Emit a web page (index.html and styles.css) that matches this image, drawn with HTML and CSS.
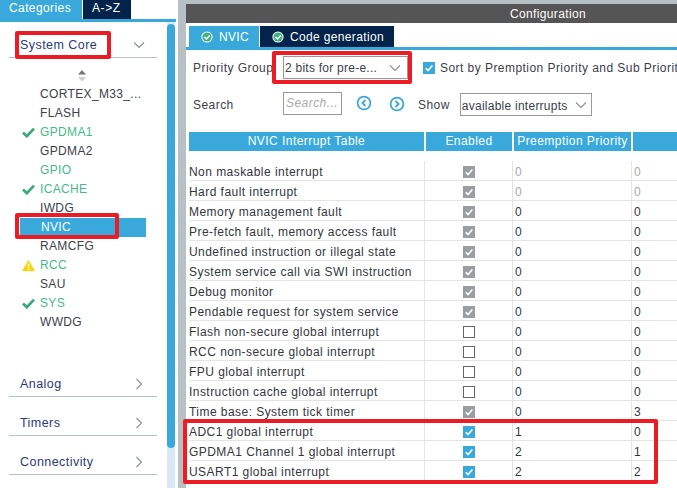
FILE: index.html
```html
<!DOCTYPE html>
<html lang="en">

<head>
    <meta charset="UTF-8">
    <title>Configuration</title>
    <link rel="stylesheet" href="styles.css">
</head>

<body>
    <svg class="defs" width="0" height="0">
        <symbol id="tick" viewBox="0 0 12 12">
            <path d="M2.8 6.2 5 8.6 9.4 3.4" fill="none" stroke="#fff" stroke-width="1.6" />
        </symbol>
        <symbol id="bigtick" viewBox="0 0 13 11">
            <path d="M1 5.5 4.8 9.2 12 1.6" fill="none" stroke="#3fa878" stroke-width="2.8" />
        </symbol>
        <symbol id="tabok" viewBox="0 0 12 12">
            <circle cx="6" cy="6" r="5.6" fill="#fff" />
            <circle cx="6" cy="6" r="4.6" fill="#3fb37f" />
            <path d="M3.4 6 5.4 8 8.8 4.4" fill="none" stroke="#fff" stroke-width="1.5" />
        </symbol>
    </svg>

    <div class="app">
        <div class="sidebar">
            <div class="sideTabs">
                <div class="sideTab sideTabOn">Categories</div>
                <div class="sideTab">A-&gt;Z</div>
            </div>
            <div class="sideBody">
                <div class="sideContent">
                    <div class="catHead">
                        <span>System Core</span>
                        <svg class="chev" width="12" height="12" viewBox="0 0 12 12"><path d="M1 3.5 6 8.5 11 3.5" /></svg>
                    </div>
                    <svg class="sortIcon" width="10" height="12" viewBox="0 0 10 12">
                        <path d="M5 0 9 4.5H1Z" fill="#777" />
                        <path d="M1 7H9L5 11.5Z" fill="#cfcfcf" />
                    </svg>
                    <ul class="periphList">
                        <li>CORTEX_M33_...</li>
                        <li>FLASH</li>
                        <li class="ok"><svg class="mark"><use href="#bigtick" /></svg>GPDMA1</li>
                        <li>GPDMA2</li>
                        <li class="ok">GPIO</li>
                        <li class="ok"><svg class="mark"><use href="#bigtick" /></svg>ICACHE</li>
                        <li>IWDG</li>
                        <li class="selected">NVIC</li>
                        <li>RAMCFG</li>
                        <li class="ok">
                            <svg class="mark" viewBox="0 0 13 11"><path d="M6.5 0 13 11H0Z" fill="#ffd200" /><path d="M6.5 3.5V7.5M6.5 8.5V10" stroke="#fff" stroke-width="1.4" /></svg>RCC
                        </li>
                        <li>SAU</li>
                        <li class="ok"><svg class="mark"><use href="#bigtick" /></svg>SYS</li>
                        <li>WWDG</li>
                    </ul>
                    <div class="catHead catFirst">
                        <span>Analog</span>
                        <svg class="chev" width="12" height="12" viewBox="0 0 12 12"><path d="M3.5 1 8.5 6 3.5 11" /></svg>
                    </div>
                    <div class="catHead">
                        <span>Timers</span>
                        <svg class="chev" width="12" height="12" viewBox="0 0 12 12"><path d="M3.5 1 8.5 6 3.5 11" /></svg>
                    </div>
                    <div class="catHead">
                        <span>Connectivity</span>
                        <svg class="chev" width="12" height="12" viewBox="0 0 12 12"><path d="M3.5 1 8.5 6 3.5 11" /></svg>
                    </div>
                </div>
                <div class="scrollTrack">
                    <div class="scrollThumb"></div>
                </div>
            </div>
        </div>

        <div class="main">
            <div class="mainTitle">Configuration</div>
            <div class="tabs">
                <div class="tab tabOn"><svg class="tabIcon"><use href="#tabok" /></svg>NVIC</div>
                <div class="tab"><svg class="tabIcon"><use href="#tabok" /></svg>Code generation</div>
            </div>

            <div class="toolRow toolFirst">
                <span class="toolLabel">Priority Group</span>
                <div class="select selectGroup">
                    <span>2 bits for pre-e...</span>
                    <svg class="chev" width="12" height="8" viewBox="0 0 12 8"><path d="M1 1.5 6 6.5 11 1.5" /></svg>
                </div>
                <span class="cb cbBlue sortCheck"><svg><use href="#tick" /></svg></span>
                <span>Sort by Premption Priority and Sub Priority</span>
            </div>
            <div class="toolRow toolSearch">
                <span class="toolLabel">Search</span>
                <div class="searchBox">Search...</div>
                <svg class="navIcon navFirst" width="16" height="16" viewBox="0 0 16 16"><circle cx="8" cy="8" r="6.4" /><path d="M9.4 5 6.4 8 9.4 11" /></svg>
                <svg class="navIcon" width="16" height="16" viewBox="0 0 16 16"><circle cx="8" cy="8" r="6.4" /><path d="M6.6 5 9.6 8 6.6 11" /></svg>
                <span class="showLabel">Show</span>
                <div class="select selectShow">
                    <span>available interrupts</span>
                    <svg class="chev" width="12" height="8" viewBox="0 0 12 8"><path d="M1 1.5 6 6.5 11 1.5" /></svg>
                </div>
            </div>

            <div class="nvicTable">
                <div class="headRow">
                    <div>NVIC Interrupt Table</div>
                    <div>Enabled</div>
                    <div>Preemption Priority</div>
                    <div></div>
                </div>
                <div class="rows">
                    <div class="row"><div>Non maskable interrupt</div><div class="c"><span class="cb cbGray"><svg><use href="#tick" /></svg></span></div><div class="off">0</div><div class="off">0</div></div>
                    <div class="row"><div>Hard fault interrupt</div><div class="c"><span class="cb cbGray"><svg><use href="#tick" /></svg></span></div><div class="off">0</div><div class="off">0</div></div>
                    <div class="row"><div>Memory management fault</div><div class="c"><span class="cb cbGray"><svg><use href="#tick" /></svg></span></div><div>0</div><div>0</div></div>
                    <div class="row"><div>Pre-fetch fault, memory access fault</div><div class="c"><span class="cb cbGray"><svg><use href="#tick" /></svg></span></div><div>0</div><div>0</div></div>
                    <div class="row"><div>Undefined instruction or illegal state</div><div class="c"><span class="cb cbGray"><svg><use href="#tick" /></svg></span></div><div>0</div><div>0</div></div>
                    <div class="row"><div>System service call via SWI instruction</div><div class="c"><span class="cb cbGray"><svg><use href="#tick" /></svg></span></div><div>0</div><div>0</div></div>
                    <div class="row"><div>Debug monitor</div><div class="c"><span class="cb cbGray"><svg><use href="#tick" /></svg></span></div><div>0</div><div>0</div></div>
                    <div class="row"><div>Pendable request for system service</div><div class="c"><span class="cb cbGray"><svg><use href="#tick" /></svg></span></div><div>0</div><div>0</div></div>
                    <div class="row"><div>Flash non-secure global interrupt</div><div class="c"><span class="cb"></span></div><div>0</div><div>0</div></div>
                    <div class="row"><div>RCC non-secure global interrupt</div><div class="c"><span class="cb"></span></div><div>0</div><div>0</div></div>
                    <div class="row"><div>FPU global interrupt</div><div class="c"><span class="cb"></span></div><div>0</div><div>0</div></div>
                    <div class="row"><div>Instruction cache global interrupt</div><div class="c"><span class="cb"></span></div><div>0</div><div>0</div></div>
                    <div class="row"><div>Time base: System tick timer</div><div class="c"><span class="cb cbGray"><svg><use href="#tick" /></svg></span></div><div>0</div><div>3</div></div>
                    <div class="row"><div>ADC1 global interrupt</div><div class="c"><span class="cb cbBlue"><svg><use href="#tick" /></svg></span></div><div>1</div><div>0</div></div>
                    <div class="row"><div>GPDMA1 Channel 1 global interrupt</div><div class="c"><span class="cb cbBlue"><svg><use href="#tick" /></svg></span></div><div>2</div><div>1</div></div>
                    <div class="row"><div>USART1 global interrupt</div><div class="c"><span class="cb cbBlue"><svg><use href="#tick" /></svg></span></div><div>2</div><div>2</div></div>
                </div>
            </div>
        </div>
    </div>

    <!-- red marks drawn over the screenshot -->
    <div class="mark1 redBox"></div>
    <div class="mark2 redBox"></div>
    <div class="mark3 redBox"></div>
    <div class="mark4 redBox"></div>
</body>

</html>
```

FILE: styles.css
```css
* {
    margin: 0;
    padding: 0;
    box-sizing: border-box;
}

html,
body {
    width: 100%;
    height: 100%;
    overflow: hidden;
}

body {
    position: relative;
    background-color: #fff;
    font-family: "Liberation Sans", Arial, sans-serif;
    font-size: 12px;
    letter-spacing: 0.45px;
    color: #3c4048;
}

.defs {
    position: absolute;
}

.app {
    display: flex;
    height: 488px;
    width: 910px;
    background-color: #b7c1c5;
}

/* left panel */
.sidebar {
    flex: 0 0 178px;
    display: flex;
    flex-direction: column;
    background-color: #fff;
}

.sideTabs {
    display: flex;
    gap: 1px;
    height: 22px;
    width: 176px;
    border-bottom: 3px solid #39a9dc;
}

.sideTab {
    width: 48px;
    height: 19px;
    line-height: 17px;
    padding-left: 9px;
    background-color: #03234b;
    color: #fff;
    letter-spacing: 0.6px;
}

.sideTabOn {
    width: 82px;
    background-color: #39a9dc;
    letter-spacing: 0.4px;
}

.sideBody {
    flex: 1;
    display: flex;
    min-height: 0;
}

.sideContent {
    width: 167px;
    padding: 0 10px 0 9px;
}

.catHead {
    display: flex;
    justify-content: space-between;
    align-items: center;
    height: 39px;
    padding: 14px 12px 0 11px;
    border-bottom: 1px solid #b7c1c5;
    color: #2a3a78;
    font-size: 12.5px;
}

.catHead:first-child {
    height: 36px;
    padding-top: 10px;
}

.catFirst {
    margin-top: 26px;
}

.chev {
    flex: none;
}

.chev path {
    fill: none;
    stroke: #8a8f93;
    stroke-width: 1.1;
}

.sortIcon {
    display: block;
    margin: 12px 0 3px 68px;
}

.periphList {
    list-style: none;
    letter-spacing: 0.35px;
}

.periphList li {
    position: relative;
    height: 19px;
    line-height: 19px;
    padding-left: 31px;
    margin-right: 2px;
}

.periphList .ok {
    color: #45b98a;
}

.periphList .selected {
    margin-left: 11px;
    margin-right: 11px;
    padding-left: 21px;
    background-color: #39a9dc;
    color: #fff;
}

.mark {
    position: absolute;
    left: 13px;
    top: 4px;
    width: 13px;
    height: 11px;
}

.scrollTrack {
    width: 8px;
    background-color: #d9e8f4;
}

.scrollThumb {
    height: 424px;
    margin-top: 2px;
    border-radius: 4px;
    background-color: #39a9dc;
}

/* right panel */
.main {
    margin-left: 8px;
    flex: 1;
    margin-top: 4px;
    background-color: #fff;
}

.mainTitle {
    height: 19px;
    line-height: 20px;
    background-color: #555;
    color: #fff;
    text-align: center;
    letter-spacing: 0.35px;
}

.tabs {
    display: flex;
    gap: 1px;
    height: 24px;
    margin-top: 3px;
    padding-left: 3px;
    border-bottom: 3px solid #39a9dc;
}

.tab {
    display: flex;
    align-items: center;
    width: 134px;
    padding-left: 12px;
    background-color: #03234b;
    color: #fff;
    letter-spacing: 0.35px;
}

.tabOn {
    width: 70px;
    background-color: #39a9dc;
}

.tabIcon {
    width: 12px;
    height: 12px;
    margin-right: 6px;
}

.toolRow {
    display: flex;
    align-items: center;
    height: 23px;
    margin-top: 13px;
    padding-left: 7px;
}

.toolFirst {
    margin-top: 6px;
}

.toolLabel {
    width: 90px;
}

.toolSearch .toolLabel,
.showLabel,
.selectShow span {
    padding-top: 2px;
}

.select {
    display: flex;
    justify-content: space-between;
    align-items: center;
    height: 23px;
    padding: 0 4px 0 1px;
    border: 1px solid #999;
    letter-spacing: 0.25px;
}

.selectGroup {
    width: 125px;
    padding-right: 6px;
}

.selectShow {
    width: 132px;
    margin-top: 2px;
}

.searchBox {
    width: 59px;
    height: 23px;
    line-height: 21px;
    padding-left: 2px;
    border: 1px solid #999;
    color: #a9a9a9;
    font-style: italic;
}

.navIcon circle,
.navIcon path {
    fill: none;
    stroke: #39a9dc;
    stroke-width: 1.8;
}

.navFirst {
    margin: -1px 17px 0 14px;
}

.showLabel {
    margin: 0 10px 0 13px;
}

.cb {
    display: block;
    flex: none;
    width: 12px;
    height: 12px;
    border: 1px solid #666;
    background-color: #fff;
}

.cb svg {
    display: block;
    width: 12px;
    height: 12px;
}

.cbBlue,
.cbGray {
    border: none;
}

.cbBlue {
    background-color: #39a9dc;
}

.cbGray {
    background-color: #9a9ea2;
}

.sortCheck {
    margin: 0 5px 0 15px;
}

/* table */
.nvicTable {
    margin-top: 17px;
    padding-left: 3px;
}

.headRow,
.row {
    display: grid;
    grid-template-columns: 235px 88px 119px 100px;
}

.headRow {
    height: 19px;
    line-height: 18px;
    color: #fff;
    text-align: center;
}

.headRow div {
    background-color: #39a9dc;
}

.headRow div+div {
    border-left: 2px solid #fff;
}

.rows {
    margin-top: 10px;
}

.row {
    height: 20px;
    line-height: 22px;
    border-bottom: 1px solid #e4e4e4;
    color: #33363d;
}

.row:last-child {
    border-bottom: none;
}

.row div+div {
    border-left: 1px solid #e4e4e4;
    padding-left: 2px;
}

.row .c {
    display: flex;
    justify-content: center;
    align-items: center;
    padding: 0;
}

.row .off {
    color: #a8a8a8;
}

/* red annotation frames */
.redBox {
    position: absolute;
    border: 4px solid #ed1c24;
    border-radius: 2px;
}

.mark1 {
    left: 15px;
    top: 31px;
    width: 96px;
    height: 28px;
}

.mark2 {
    left: 15px;
    top: 213px;
    width: 104px;
    height: 26px;
}

.mark3 {
    left: 272px;
    top: 51px;
    width: 140px;
    height: 33px;
}

.mark4 {
    left: 183px;
    top: 419px;
    width: 475px;
    height: 65px;
}
```
